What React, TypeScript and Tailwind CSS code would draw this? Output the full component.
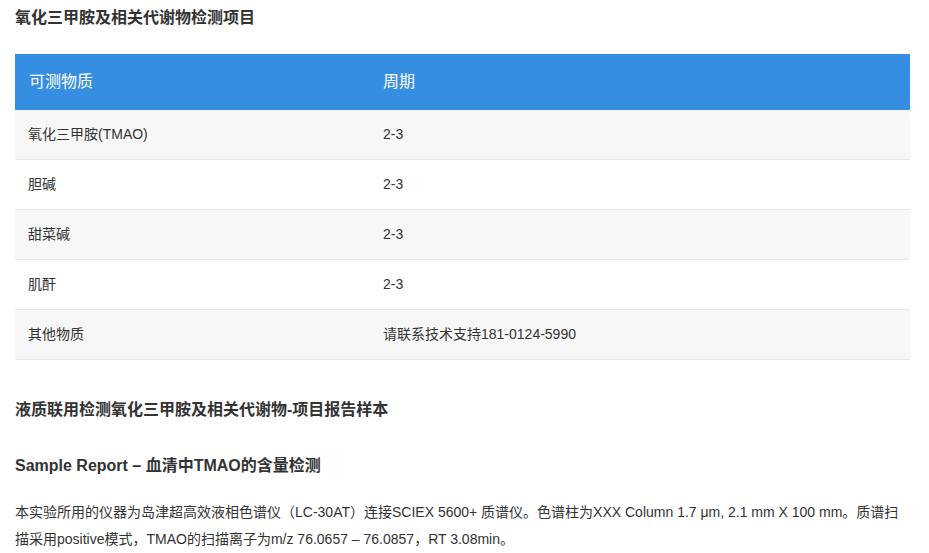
const ROWS = [
  { name: '氧化三甲胺(TMAO)', period: '2-3' },
  { name: '胆碱', period: '2-3' },
  { name: '甜菜碱', period: '2-3' },
  { name: '肌酐', period: '2-3' },
  { name: '其他物质', period: '请联系技术支持181-0124-5990' },
];

export default function App() {
  return (
    <div
      className="min-h-[553px] w-[929px] bg-white px-[15px] text-[#333]"
      style={{ fontFamily: '"Liberation Sans", "Noto Sans CJK SC", sans-serif' }}
    >
      <h2 className="h-[36px] text-[16px] font-bold leading-[36px]">氧化三甲胺及相关代谢物检测项目</h2>

      <div className="mt-[18px] w-[895px]">
        <div className="flex h-[56px] items-center bg-[#358ee1] text-[16px] text-white">
          <div className="w-[355px] pl-[14px]">可测物质</div>
          <div className="flex-1 pl-[13px]">周期</div>
        </div>
        {ROWS.map((row, i) => (
          <div
            key={row.name}
            className={`flex h-[50px] items-center border-b border-[#e8e8e8] text-[14px] ${i % 2 === 0 ? 'bg-[#f7f7f7]' : 'bg-white'}`}
          >
            <div className="w-[355px] pl-[13px]">{row.name}</div>
            <div className="flex-1 pl-[13px]">{row.period}</div>
          </div>
        ))}
      </div>

      <h3 className="mt-[38px] text-[16px] font-bold leading-[24px]">液质联用检测氧化三甲胺及相关代谢物-项目报告样本</h3>
      <h3 className="mt-[32px] text-[16px] font-bold leading-[24px]">Sample Report – 血清中TMAO的含量检测</h3>

      <p className="mt-[21px] w-[895px] text-[14px] leading-[27px]">
        本实验所用的仪器为岛津超高效液相色谱仪（LC-30AT）连接SCIEX 5600+ 质谱仪。色谱柱为XXX Column 1.7 μm, 2.1 mm X 100 mm。质谱扫描采用positive模式，TMAO的扫描离子为m/z 76.0657 – 76.0857，RT 3.08min。
      </p>
    </div>
  );
}
